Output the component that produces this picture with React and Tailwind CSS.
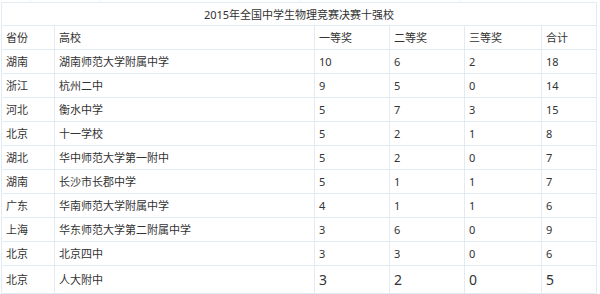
import React from "react";

const rows = [
  ["湖南", "湖南师范大学附属中学", 10, 6, 2, 18],
  ["浙江", "杭州二中", 9, 5, 0, 14],
  ["河北", "衡水中学", 5, 7, 3, 15],
  ["北京", "十一学校", 5, 2, 1, 8],
  ["湖北", "华中师范大学第一附中", 5, 2, 0, 7],
  ["湖南", "长沙市长郡中学", 5, 1, 1, 7],
  ["广东", "华南师范大学附属中学", 4, 1, 1, 6],
  ["上海", "华东师范大学第二附属中学", 3, 6, 0, 9],
  ["北京", "北京四中", 3, 3, 0, 6],
];

const cell = "border border-[#e2eaf3] px-[4px] text-left align-middle font-normal";

export default function App() {
  return (
    <div className="w-[600px] h-[294px] bg-white text-[11px] text-[#333] font-['Noto_Sans','Noto_Sans_CJK_SC',sans-serif] leading-none overflow-hidden">
      <div className="flex h-[2px] ml-[1px] w-[594px]">
        <div className="w-[30px] border-r border-[#eef2f7]" />
        <div className="w-[70px] border-r border-[#eef2f7]" />
        <div className="w-[200px] border-r border-[#eef2f7]" />
        <div className="w-[160px] border-r border-[#eef2f7]" />
      </div>
      <table className="ml-[1px] w-[595px] border-collapse table-fixed">
        <colgroup>
          <col className="w-[53px]" />
          <col className="w-[260px]" />
          <col className="w-[75px]" />
          <col className="w-[75px]" />
          <col className="w-[77px]" />
          <col className="w-[55px]" />
        </colgroup>
        <tbody>
          <tr className="h-[23px]">
            <td colSpan={6} className="border border-[#e2eaf3] text-center align-middle">
              2015年全国中学生物理竞赛决赛十强校
            </td>
          </tr>
          <tr className="h-[24px]">
            {["省份", "高校", "一等奖", "二等奖", "三等奖", "合计"].map((h) => (
              <td key={h} className={cell}>{h}</td>
            ))}
          </tr>
          {rows.map((r, i) => (
            <tr key={i} className="h-[24px]">
              {r.map((v, j) => (
                <td key={j} className={cell}>{v}</td>
              ))}
            </tr>
          ))}
          <tr className="h-[28px]">
            <td className={cell}>北京</td>
            <td className={cell}>人大附中</td>
            <td className={cell + " text-[14px]"}>3</td>
            <td className={cell + " text-[14px]"}>2</td>
            <td className={cell + " text-[14px]"}>0</td>
            <td className={cell + " text-[14px]"}>5</td>
          </tr>
        </tbody>
      </table>
    </div>
  );
}
